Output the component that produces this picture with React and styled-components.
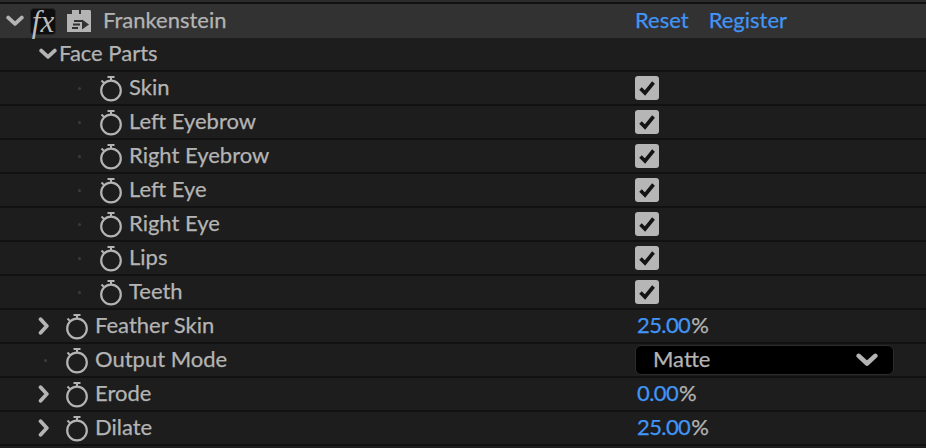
import React from "react";
import styled, { createGlobalStyle } from "styled-components";

const GlobalStyle = createGlobalStyle`
  html, body {
    margin: 0;
    padding: 0;
    background: #1d1d1d;
    overflow: hidden;
  }
`;

const Panel = styled.div`
  width: 926px;
  height: 448px;
  overflow: hidden;
  background: #1d1d1d;
  font-family: "Lato", "Open Sans", sans-serif;
  font-size: 22px;
  color: #b4b4b4;
  -webkit-text-stroke: 0.25px currentColor;
`;

const TopEdge = styled.div`
  height: 2px;
  background: #2b2b2b;
  border-bottom: 2px solid #111111;
`;

const Row = styled.div`
  display: flex;
  align-items: center;
  box-sizing: border-box;
  height: 34px;
  background: ${(p) => (p.$header ? "#323232" : "#1d1d1d")};
  border-bottom: ${(p) => (p.$header ? "none" : "2px solid #111111")};
`;

const NameCell = styled.div`
  width: 635px;
  flex: none;
  display: flex;
  align-items: center;
  height: 100%;
  padding-left: ${(p) => p.$indent}px;
  box-sizing: border-box;
`;

const ValueCell = styled.div`
  flex: 1;
  display: flex;
  align-items: center;
  height: 100%;
`;

const Twirl = styled.span`
  width: 20px;
  height: 20px;
  flex: none;
  display: flex;
  align-items: center;
  justify-content: center;
  margin-right: ${(p) => p.$gap || 0}px;
`;

const Dot = styled.span`
  width: 3px;
  height: 3px;
  flex: none;
  border-radius: 50%;
  background: #3c3c3c;
  margin-right: ${(p) => p.$gap}px;
`;

const FxBox = styled.span`
  width: 26px;
  height: 27px;
  flex: none;
  margin-left: 5px;
  box-sizing: border-box;
  background: #0e0e0e;
  border: 1px solid #242424;
  border-radius: 4px;
  display: flex;
  align-items: center;
  justify-content: center;
  font-family: "Liberation Serif", serif;
  font-style: italic;
  font-size: 31px;
  line-height: 1;
  color: #bdbdbd;
  -webkit-text-stroke: 0;
`;

const Label = styled.span`
  color: #b4b4b4;
  line-height: 1;
  white-space: nowrap;
  padding-bottom: 2px;
  margin-left: ${(p) => p.$gap || 0}px;
`;

const Link = styled.span`
  color: #4294f5;
  line-height: 1;
  padding-bottom: 2px;
  margin-right: 20px;
`;

const Check = styled.span`
  width: 24px;
  height: 24px;
  border-radius: 3px;
  background: #b6b6b6;
  display: flex;
  align-items: center;
  justify-content: center;
`;

const PercentValue = styled.span`
  color: #4294f5;
  line-height: 1;
  padding-bottom: 2px;
  margin-left: 2px;
  margin-right: 1px;
  letter-spacing: -0.6px;
`;

const Select = styled.div`
  width: 259px;
  height: 30px;
  box-sizing: border-box;
  background: #000000;
  border: 1px solid #2c2c2c;
  border-radius: 6px;
  display: flex;
  align-items: center;
  justify-content: space-between;
  padding: 0 15px 0 17px;
`;

const Chevron = ({ dir = "down", size = 18 }) => (
  <svg width={size} height={size} viewBox="0 0 16 16" fill="none">
    <path
      d={dir === "down" ? "M2 5l6 5.5L14 5" : "M5 2l5.5 6L5 14"}
      stroke="#b4b4b4"
      strokeWidth="3.4"
      strokeLinecap="round"
      strokeLinejoin="round"
    />
  </svg>
);

const Stopwatch = () => (
  <svg width="24" height="27" viewBox="0 0 24 27" fill="none" style={{ flex: "none" }}>
    <circle cx="12" cy="15.5" r="9.8" stroke="#b4b4b4" strokeWidth="2.2" />
    <path d="M8.5 2h7M12 2v4" stroke="#b4b4b4" strokeWidth="2" />
    <path d="M2.5 5.5l2.6 2.6" stroke="#b4b4b4" strokeWidth="2" />
  </svg>
);

const EffectIcon = () => (
  <svg width="24" height="22" viewBox="0 0 24 22" style={{ flex: "none", marginLeft: "11px" }}>
    <path d="M0 4h5V0h7v4h2V0h9l1 1v21H0z" fill="#b4b4b4" />
    <path d="M7 10h8v2H7zM6 13.5h7v2H6zM5 17h6v2H5z" fill="#323232" />
    <path d="M15 9.5l7 5-7 5z" fill="#323232" />
  </svg>
);

const CheckMark = () => (
  <svg width="18" height="16" viewBox="0 0 18 16" fill="none">
    <path d="M2.5 8.5l4.5 4.5L15.5 2.5" stroke="#141414" strokeWidth="3.6" />
  </svg>
);

const parts = ["Skin", "Left Eyebrow", "Right Eyebrow", "Left Eye", "Right Eye", "Lips", "Teeth"];

function PartRow({ name }) {
  return (
    <Row>
      <NameCell $indent={78}>
        <Dot $gap={18} />
        <Stopwatch />
        <Label $gap={6}>{name}</Label>
      </NameCell>
      <ValueCell>
        <Check>
          <CheckMark />
        </Check>
      </ValueCell>
    </Row>
  );
}

function PercentRow({ name, value }) {
  return (
    <Row>
      <NameCell $indent={34}>
        <Twirl $gap={11}>
          <Chevron dir="right" />
        </Twirl>
        <Stopwatch />
        <Label $gap={6}>{name}</Label>
      </NameCell>
      <ValueCell>
        <PercentValue>{value}</PercentValue>
        <Label>%</Label>
      </ValueCell>
    </Row>
  );
}

export default function App() {
  return (
    <Panel>
      <GlobalStyle />
      <TopEdge />
      <Row $header>
        <NameCell $indent={5}>
          <Twirl>
            <Chevron />
          </Twirl>
          <FxBox>fx</FxBox>
          <EffectIcon />
          <Label $gap={12}>Frankenstein</Label>
        </NameCell>
        <ValueCell>
          <Link>Reset</Link>
          <Link>Register</Link>
        </ValueCell>
      </Row>
      <Row>
        <NameCell $indent={38}>
          <Twirl>
            <Chevron />
          </Twirl>
          <Label $gap={1}>Face Parts</Label>
        </NameCell>
      </Row>
      {parts.map((name) => (
        <PartRow key={name} name={name} />
      ))}
      <PercentRow name="Feather Skin" value="25.00" />
      <Row>
        <NameCell $indent={44}>
          <Dot $gap={18} />
          <Stopwatch />
          <Label $gap={6}>Output Mode</Label>
        </NameCell>
        <ValueCell>
          <Select>
            <Label>Matte</Label>
            <Chevron size={22} />
          </Select>
        </ValueCell>
      </Row>
      <PercentRow name="Erode" value="0.00" />
      <PercentRow name="Dilate" value="25.00" />
    </Panel>
  );
}
